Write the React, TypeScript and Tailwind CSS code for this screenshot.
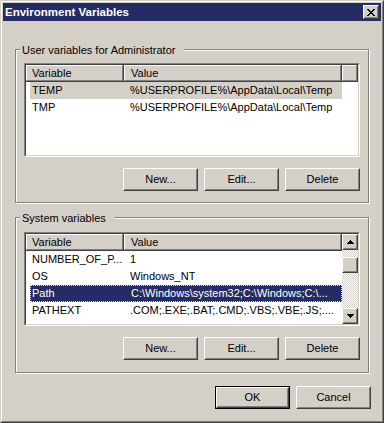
import type { ReactNode } from "react";

type Row = { name: string; value: string; state?: "inactive" | "active" };

const userVars: Row[] = [
  { name: "TEMP", value: "%USERPROFILE%\\AppData\\Local\\Temp", state: "inactive" },
  { name: "TMP", value: "%USERPROFILE%\\AppData\\Local\\Temp" },
];

const systemVars: Row[] = [
  { name: "NUMBER_OF_P...", value: "1" },
  { name: "OS", value: "Windows_NT" },
  { name: "Path", value: "C:\\Windows\\system32;C:\\Windows;C:\\...", state: "active" },
  { name: "PATHEXT", value: ".COM;.EXE;.BAT;.CMD;.VBS;.VBE;.JS;...." },
];

// Classic 3D raised frame (buttons, header cells, scroll parts)
function Raised({ children, className = "" }: { children?: ReactNode; className?: string }) {
  return (
    <div className={`border border-t-white border-l-white border-r-[#404040] border-b-[#404040] ${className}`}>
      <div className="h-full w-full border border-t-[#d4d0c8] border-l-[#d4d0c8] border-r-[#808080] border-b-[#808080] bg-[#d4d0c8] flex items-center justify-center">
        {children}
      </div>
    </div>
  );
}

function Button({ label, isDefault = false }: { label: string; isDefault?: boolean }) {
  if (isDefault) {
    return (
      <div className="w-[75px] h-[23px] border border-black flex">
        <div className="flex-1 border border-t-white border-l-white border-r-[#404040] border-b-[#404040]">
          <div className="h-full w-full border border-t-[#d4d0c8] border-l-[#d4d0c8] border-r-[#808080] border-b-[#808080] flex items-center justify-center">
            {label}
          </div>
        </div>
      </div>
    );
  }
  return <Raised className="w-[75px] h-[23px]">{label}</Raised>;
}

function CloseGlyph() {
  return (
    <svg width="8" height="7" viewBox="0 0 8 7" shapeRendering="crispEdges">
      <g fill="#000">
        <rect x="0" y="0" width="2" height="1" />
        <rect x="6" y="0" width="2" height="1" />
        <rect x="1" y="1" width="2" height="1" />
        <rect x="5" y="1" width="2" height="1" />
        <rect x="2" y="2" width="4" height="1" />
        <rect x="3" y="3" width="2" height="1" />
        <rect x="2" y="4" width="4" height="1" />
        <rect x="1" y="5" width="2" height="1" />
        <rect x="5" y="5" width="2" height="1" />
        <rect x="0" y="6" width="2" height="1" />
        <rect x="6" y="6" width="2" height="1" />
      </g>
    </svg>
  );
}

function Arrow({ down = false }: { down?: boolean }) {
  return (
    <svg width="7" height="4" viewBox="0 0 7 4" shapeRendering="crispEdges" className={down ? "rotate-180" : ""}>
      <g fill="#000">
        <rect x="3" y="0" width="1" height="1" />
        <rect x="2" y="1" width="3" height="1" />
        <rect x="1" y="2" width="5" height="1" />
        <rect x="0" y="3" width="7" height="1" />
      </g>
    </svg>
  );
}

function HeaderCell({ label, width, pad }: { label?: string; width: string; pad: string }) {
  return (
    <div className={`h-[17px] ${width} border-r border-b border-r-[#404040] border-b-[#404040] shrink-0`}>
      <div className={`h-full border border-t-white border-l-white border-r-[#808080] border-b-[#808080] bg-[#d4d0c8] flex items-center ${pad}`}>
        {label}
      </div>
    </div>
  );
}

function ListRow({ row }: { row: Row }) {
  const bg =
    row.state === "active"
      ? "bg-[#242c63] text-white border border-dotted border-[#e6dfae]"
      : row.state === "inactive"
      ? "bg-[#d4d0c8]"
      : "";
  const pad = row.state === "active" ? "pl-[1px]" : "pl-[2px]";
  return (
    <div className="h-[17px] flex pl-[4px] shrink-0">
      <div className={`w-[312px] h-full flex items-center whitespace-nowrap leading-[15px] ${bg}`}>
        <div className={`w-[94px] shrink-0 overflow-hidden ${pad}`}>{row.name}</div>
        <div className="pl-[6px] overflow-hidden">{row.value}</div>
      </div>
    </div>
  );
}

function Scrollbar() {
  return (
    <div className="w-[16px] h-full flex flex-col shrink-0">
      <Raised className="h-[16px]">
        <Arrow />
      </Raised>
      <div className="h-[58px] bg-[image:repeating-conic-gradient(#ffffff_0%_25%,#d4d0c8_0%_50%)] bg-[length:2px_2px] pt-[7px]">
        <Raised className="h-[16px]" />
      </div>
      <Raised className="h-[16px]">
        <Arrow down />
      </Raised>
    </div>
  );
}

function VarList({ rows, scroll = false }: { rows: Row[]; scroll?: boolean }) {
  return (
    <div className="h-[94px] border border-t-[#808080] border-l-[#808080] border-r-white border-b-white">
      <div className="h-full border border-t-[#404040] border-l-[#404040] border-r-[#d4d0c8] border-b-[#d4d0c8] bg-white flex overflow-hidden">
        <div className="w-[316px] flex flex-col shrink-0">
          <div className="flex">
            <HeaderCell label="Variable" width="w-[98px]" pad="pl-[5px]" />
            <HeaderCell label="Value" width="w-[218px]" pad="pl-[6px]" />
          </div>
          {rows.map((r) => (
            <ListRow key={r.name} row={r} />
          ))}
        </div>
        {scroll ? <Scrollbar /> : <HeaderCell width="w-[16px]" pad="" />}
      </div>
    </div>
  );
}

function GroupBox({
  label,
  children,
  className,
}: {
  label: string;
  children: ReactNode;
  className: string;
}) {
  return (
    <div
      className={`relative ml-[12px] w-[354px] border border-[#808080] shadow-[inset_1px_1px_0_#ffffff,1px_1px_0_#ffffff] px-[8px] ${className}`}
    >
      <span className="absolute left-[4px] top-[-6px] bg-[#d4d0c8] pl-[2px] pr-[9px] leading-[13px]">
        {label}
      </span>
      {children}
    </div>
  );
}

export default function App() {
  return (
    <div className="w-[384px] h-[423px] overflow-hidden font-['Liberation_Sans',Arial,sans-serif] text-[11px] text-black select-none">
      <div className="h-full border border-t-[#d4d0c8] border-l-[#d4d0c8] border-r-[#404040] border-b-[#404040]">
        <div className="h-full border border-t-white border-l-white border-r-[#808080] border-b-[#808080]">
          <div className="h-full p-[1px] bg-[#d4d0c8] flex flex-col">
            {/* Title bar */}
            <div className="h-[18px] bg-[#242c63] flex items-center pl-[2px] pr-[2px] shrink-0">
              <span className="flex-1 text-white font-bold text-[11.5px] leading-[18px]">
                Environment Variables
              </span>
              <Raised className="w-[16px] h-[14px]">
                <CloseGlyph />
              </Raised>
            </div>

            {/* Body */}
            <div className="flex flex-col pt-[28px]">
              <GroupBox label="User variables for Administrator" className="pt-[13px] pb-[11px]">
                <VarList rows={userVars} />
                <div className="flex justify-end gap-[6px] mt-[11px]">
                  <Button label="New..." />
                  <Button label="Edit..." />
                  <Button label="Delete" />
                </div>
              </GroupBox>

              <GroupBox label="System variables" className="mt-[14px] pt-[14px] pb-[12px]">
                <VarList rows={systemVars} scroll />
                <div className="flex justify-end gap-[6px] mt-[11px]">
                  <Button label="New..." />
                  <Button label="Edit..." />
                  <Button label="Delete" />
                </div>
              </GroupBox>

              <div className="flex justify-end gap-[6px] mt-[13px] pr-[10px]">
                <Button label="OK" isDefault />
                <Button label="Cancel" />
              </div>
            </div>
          </div>
        </div>
      </div>
    </div>
  );
}
